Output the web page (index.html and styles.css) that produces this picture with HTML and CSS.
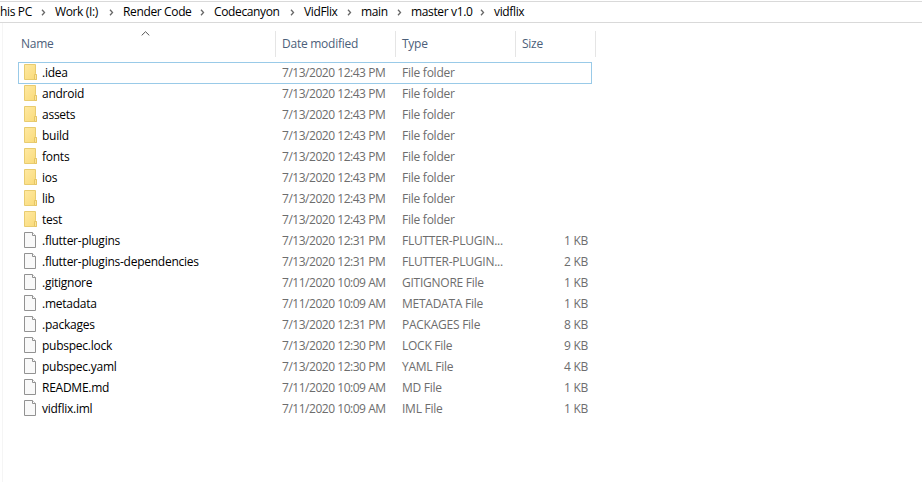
FILE: index.html
```html
<!DOCTYPE html>
<html lang="en">
<head>
<meta charset="utf-8">
<title>vidflix</title>
<link rel="stylesheet" href="styles.css">
</head>
<body>
<svg class="defs" width="0" height="0" aria-hidden="true">
  <linearGradient id="gold" x1="0" y1="0" x2="1" y2="1"><stop offset="0" stop-color="#ffe9a2"/><stop offset="1" stop-color="#f9da78"/></linearGradient>
  <symbol id="folder" viewBox="0 0 14 16"><path d="M.5.5h11v9.3l1 1v4.7H.5z" fill="url(#gold)" stroke="#e8cc70"/><path d="M10.5 15.500v-5h2v5z" fill="#fce699" stroke="#e6c566"/></symbol>
  <symbol id="file" viewBox="0 0 14 16"><path d="M.5.5h8l3 3v12H.5z" fill="#f9f9f9" stroke="#929292"/><path d="M8.500.5v3h3" fill="#fff" stroke="#929292"/></symbol>
  <symbol id="chev" viewBox="0 0 5 7"><path d="M1 .8l2.500 2.700L1 6.200" fill="none" stroke="#686868" stroke-width="1.300"/></symbol>
</svg>
<nav class="path">
  <span class="crumb">his PC<svg><use href="#chev"/></svg></span>
  <span class="crumb">Work (I:)<svg><use href="#chev"/></svg></span>
  <span class="crumb">Render Code<svg><use href="#chev"/></svg></span>
  <span class="crumb">Codecanyon<svg><use href="#chev"/></svg></span>
  <span class="crumb">VidFlix<svg><use href="#chev"/></svg></span>
  <span class="crumb">main<svg><use href="#chev"/></svg></span>
  <span class="crumb">master v1.0<svg><use href="#chev"/></svg></span>
  <span class="crumb">vidflix</span>
</nav>
<main class="pane">
  <div class="head">
    <div class="col">Name<svg class="sort" viewBox="0 0 9 5"><path d="M.7 4.400l3.800-3.700 3.800 3.700" fill="none" stroke="#555"/></svg></div>
    <div class="col">Date modified</div><div class="col">Type</div><div class="col">Size</div>
  </div>
  <div class="list">
    <div class="row selected"><svg><use href="#folder"/></svg><b>.idea</b><i class="date">7/13/2020 12:43 PM</i><i>File folder</i><i></i></div>
    <div class="row"><svg><use href="#folder"/></svg><b>android</b><i class="date">7/13/2020 12:43 PM</i><i>File folder</i><i></i></div>
    <div class="row"><svg><use href="#folder"/></svg><b>assets</b><i class="date">7/13/2020 12:43 PM</i><i>File folder</i><i></i></div>
    <div class="row"><svg><use href="#folder"/></svg><b>build</b><i class="date">7/13/2020 12:43 PM</i><i>File folder</i><i></i></div>
    <div class="row"><svg><use href="#folder"/></svg><b>fonts</b><i class="date">7/13/2020 12:43 PM</i><i>File folder</i><i></i></div>
    <div class="row"><svg><use href="#folder"/></svg><b>ios</b><i class="date">7/13/2020 12:43 PM</i><i>File folder</i><i></i></div>
    <div class="row"><svg><use href="#folder"/></svg><b>lib</b><i class="date">7/13/2020 12:43 PM</i><i>File folder</i><i></i></div>
    <div class="row"><svg><use href="#folder"/></svg><b>test</b><i class="date">7/13/2020 12:43 PM</i><i>File folder</i><i></i></div>
    <div class="row"><svg><use href="#file"/></svg><b>.flutter-plugins</b><i class="date">7/13/2020 12:31 PM</i><i>FLUTTER-PLUGIN...</i><i>1 KB</i></div>
    <div class="row"><svg><use href="#file"/></svg><b>.flutter-plugins-dependencies</b><i class="date">7/13/2020 12:31 PM</i><i>FLUTTER-PLUGIN...</i><i>2 KB</i></div>
    <div class="row"><svg><use href="#file"/></svg><b>.gitignore</b><i class="date">7/11/2020 10:09 AM</i><i>GITIGNORE File</i><i>1 KB</i></div>
    <div class="row"><svg><use href="#file"/></svg><b>.metadata</b><i class="date">7/11/2020 10:09 AM</i><i>METADATA File</i><i>1 KB</i></div>
    <div class="row"><svg><use href="#file"/></svg><b>.packages</b><i class="date">7/13/2020 12:31 PM</i><i>PACKAGES File</i><i>8 KB</i></div>
    <div class="row"><svg><use href="#file"/></svg><b>pubspec.lock</b><i class="date">7/13/2020 12:30 PM</i><i>LOCK File</i><i>9 KB</i></div>
    <div class="row"><svg><use href="#file"/></svg><b>pubspec.yaml</b><i class="date">7/13/2020 12:30 PM</i><i>YAML File</i><i>4 KB</i></div>
    <div class="row"><svg><use href="#file"/></svg><b>README.md</b><i class="date">7/11/2020 10:09 AM</i><i>MD File</i><i>1 KB</i></div>
    <div class="row"><svg><use href="#file"/></svg><b>vidflix.iml</b><i class="date">7/11/2020 10:09 AM</i><i>IML File</i><i>1 KB</i></div>
  </div>
</main>
</body>
</html>
```
FILE: styles.css
```css
* { box-sizing: border-box; }
body {
  margin: 0;
  height: 482px;
  overflow: hidden;
  background: #fff;
  color: #000;
  font: 12px/20px "Open Sans", "Noto Sans", sans-serif;
  letter-spacing: -0.25px;
}
.defs { position: absolute; }
.path {
  display: grid;
  grid-template-columns: 55px 68px 91px 90px 57px 50px 83px 1fr;
  height: 22px;
  margin-top: 1px;
  border-top: 1px solid #d9d9d9;
  border-bottom: 1px solid #d9d9d9;
  letter-spacing: -0.36px;
  white-space: nowrap;
}
.crumb { display: flex; align-items: center; justify-content: space-between; padding-right: 9px; }
.crumb svg { width: 5px; height: 7px; flex: none; margin-top: 1px; }
.pane { margin-left: 2px; height: 459px; padding-top: 8px; border-left: 1px solid #f5f5f5; }
.head {
  display: grid;
  grid-template-columns: 273px 120px 120px 80px;
  height: 25px;
  color: #4c607a;
  line-height: 26px;
}
.col { position: relative; padding-left: 6px; border-right: 1px solid #e5e5e5; }
.col:first-child { padding-left: 18px; }
.sort { position: absolute; left: 138px; top: 0; width: 9px; height: 5px; }
.list { margin: 6px 0 0 15px; }
.row {
  display: grid;
  grid-template-columns: 18px 240px 120px 120px 66px;
  align-items: start;
  width: 574px;
  height: 21px;
  padding-left: 5px;
  border: 1px solid transparent;
  line-height: 19px;
  white-space: nowrap;
}
.selected { height: 22px; margin-bottom: -1px; border-color: #99cae8; }
.row svg { width: 14px; height: 16px; margin-top: 1px; }
.row b { font-weight: 400; }
.row i { font-style: normal; color: #6d6d6d; }
.row .date { letter-spacing: -0.47px; }
.row i:last-child { text-align: right; }
```
